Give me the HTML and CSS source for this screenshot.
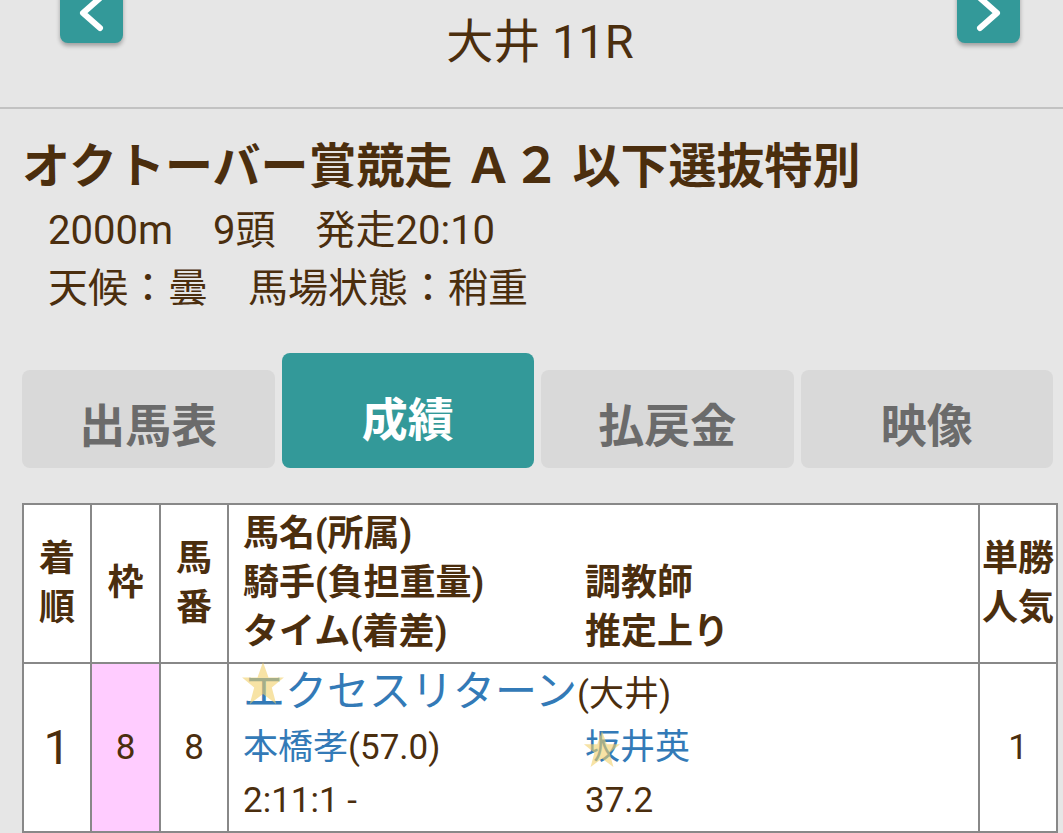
FILE: index.html
```html
<!DOCTYPE html>
<html lang="ja">

<head>
  <meta charset="UTF-8">
  <meta name="viewport" content="width=device-width, initial-scale=1.0">
  <title>大井 11R 成績</title>
  <link rel="stylesheet" href="styles.css">
</head>

<body>
  <header class="race-nav">
    <a class="nav-btn" href="#">
      <svg viewBox="0 0 63 63" width="63" height="63">
        <polyline points="40,18 23,33 40,48" />
      </svg>
    </a>
    <div class="race-no">大井 11R</div>
    <a class="nav-btn" href="#">
      <svg viewBox="0 0 63 63" width="63" height="63">
        <polyline points="23,18 40,33 23,48" />
      </svg>
    </a>
  </header>

  <main class="content">
    <h1 class="race-name">オクトーバー賞競走 Ａ２ 以下選抜特別</h1>
    <div class="race-meta">
      <p>2000m　9頭　発走20:10</p>
      <p>天候：曇　馬場状態：稍重</p>
    </div>

    <!-- タブ -->
    <nav class="tabs">
      <a class="tab" href="#">出馬表</a>
      <a class="tab active" href="#">成績</a>
      <a class="tab" href="#">払戻金</a>
      <a class="tab" href="#">映像</a>
    </nav>

    <!-- 成績表 -->
    <table class="result">
      <colgroup>
        <col class="c-rank">
        <col class="c-waku">
        <col class="c-num">
        <col class="c-horse">
        <col class="c-pop">
      </colgroup>
      <thead>
        <tr>
          <th>着<br>順</th>
          <th>枠</th>
          <th>馬<br>番</th>
          <th class="detail">
            <div class="detail-grid">
              <div class="full">馬名(所属)</div>
              <div>騎手(負担重量)</div>
              <div>調教師</div>
              <div>タイム(着差)</div>
              <div>推定上り</div>
            </div>
          </th>
          <th>単勝<br>人気</th>
        </tr>
      </thead>
      <tbody>
        <tr>
          <td class="rank">1</td>
          <td class="waku-8">8</td>
          <td>8</td>
          <td class="detail">
            <div class="detail-grid">
              <div class="full">
                <span class="marked"><svg class="star star-lg" viewBox="0 0 40 40"><polygon points="20,1 25,15 39,15 28,24 32,39 20,30 8,39 12,24 1,15 15,15" /></svg><a class="horse" href="#">エクセスリターン</a></span>(大井)
              </div>
              <div><a href="#">本橋孝</a>(57.0)</div>
              <div><span class="marked"><svg class="star star-sm" viewBox="0 0 40 40"><polygon points="20,1 25,15 39,15 28,24 32,39 20,30 8,39 12,24 1,15 15,15" /></svg><a href="#">坂井英</a></span></div>
              <div>2:11:1 -</div>
              <div>37.2</div>
            </div>
          </td>
          <td>1</td>
        </tr>
        <tr>
          <td></td>
          <td></td>
          <td></td>
          <td></td>
          <td></td>
        </tr>
      </tbody>
    </table>
  </main>
</body>

</html>
```

FILE: styles.css
```css
* {
  margin: 0;
  padding: 0;
  box-sizing: border-box;
}

body {
  font-family: Roboto, "Noto Sans CJK JP", sans-serif;
  background: #e6e6e6;
  color: #4b2e0e;
  overflow: hidden;
}

a {
  color: inherit;
  text-decoration: none;
}

/* ヘッダー */
.race-nav {
  display: flex;
  justify-content: space-between;
  align-items: flex-start;
  height: 109px;
  padding: 0 43px 0 60px;
  border-bottom: 2px solid #c2c2c2;
}

.nav-btn {
  display: block;
  width: 63px;
  height: 63px;
  margin-top: -20px;
  background: #339999;
  border-radius: 8px;
  box-shadow: 0 3px 4px rgba(0, 0, 0, 0.3);
}

.nav-btn svg {
  display: block;
}

.nav-btn polyline {
  fill: none;
  stroke: #fff;
  stroke-width: 6;
  stroke-linecap: round;
  stroke-linejoin: round;
}

.race-no {
  font-size: 47px;
  line-height: 56px;
  padding-top: 14px;
}

/* レース情報 */
.content {
  padding: 0 5px 0 22px;
}

.race-name {
  margin-top: 30px;
  font-size: 48px;
  font-weight: 700;
  line-height: 56px;
  white-space: nowrap;
}

.race-meta {
  margin-top: 7px;
  padding-left: 26px;
  font-size: 40px;
  line-height: 58px;
}

/* タブ */
.tabs {
  display: grid;
  grid-template-columns: repeat(4, 1fr);
  gap: 7px;
  align-items: end;
  margin-top: 35px;
  padding-right: 5px;
}

.tab {
  display: flex;
  justify-content: center;
  align-items: center;
  height: 98px;
  padding-top: 5px;
  background: #d9d9d9;
  border-radius: 8px;
  color: #6b6b6b;
  font-size: 46px;
  font-weight: 700;
}

.tab.active {
  height: 115px;
  padding-top: 10px;
  background: #339999;
  color: #fff;
}

/* 成績表 */
.result {
  width: 100%;
  margin-top: 35px;
  border-collapse: collapse;
  table-layout: fixed;
  background: #fff;
}

.c-rank { width: 68px; }
.c-waku { width: 69px; }
.c-num { width: 68px; }
.c-horse { width: 751px; }

.result th,
.result td {
  border: 2px solid #888;
  text-align: center;
  vertical-align: middle;
}

.result th {
  height: 158px;
  padding: 5px 0;
  font-size: 36px;
  font-weight: 700;
  line-height: 49px;
}

.result td {
  height: 167px;
  padding: 4px 0;
  font-size: 35px;
  line-height: 53px;
}

.result .detail {
  text-align: left;
  padding-left: 14px;
}

.detail-grid {
  display: grid;
  grid-template-columns: 342px 1fr;
}

.detail-grid .full {
  grid-column: 1 / 3;
}

.result td.rank {
  font-size: 48px;
}

.waku-8 {
  background: #ffccff;
}

.result td a {
  color: #337ab7;
}

.horse {
  font-size: 42px;
  line-height: 1;
}

.marked {
  position: relative;
}

.star {
  position: absolute;
  fill: #f2d16b;
  opacity: 0.6;
  pointer-events: none;
}

.star-lg {
  width: 44px;
  height: 46px;
  left: -2px;
  top: -14px;
}

.star-sm {
  width: 38px;
  height: 42px;
  left: -2px;
  top: 1px;
}
```
